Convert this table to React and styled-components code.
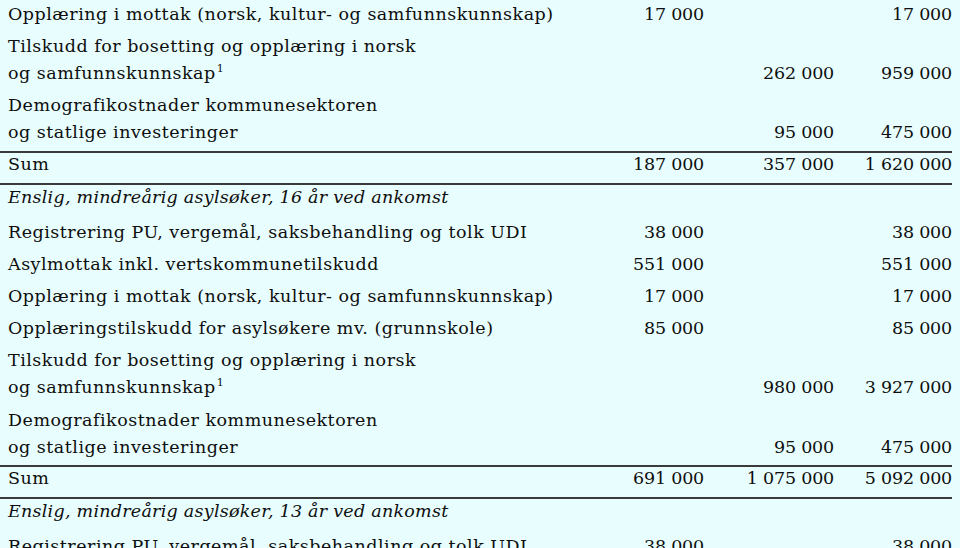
import React from "react";
import styled, { createGlobalStyle, css } from "styled-components";

const Global = createGlobalStyle`
  html, body {
    margin: 0;
    padding: 0;
    background: #e8fdfd;
  }
  body {
    width: 960px;
    height: 548px;
    overflow: hidden;
  }
`;

const Sheet = styled.div`
  width: 952px;
  margin-top: -1.5px;
  font-family: "DejaVu Serif", "Liberation Serif", serif;
  font-size: 17.5px;
  color: #0e0e0e;
`;

const Row = styled.div`
  display: grid;
  grid-template-columns: 1fr 110px 130px 118px;
  align-items: end;
  line-height: 27px;
  padding: 2.6px 0;

  ${(p) =>
    p.$kind === "sum" &&
    css`
      margin-top: 2px;
      line-height: 22px;
      padding: 0 0 8px;
      border-top: 2px solid #3a3a3a;
      border-bottom: 2px solid #3a3a3a;
    `}

  ${(p) =>
    p.$kind === "heading" &&
    css`
      line-height: 24px;
      padding: 0 0 7px;
      font-style: italic;
    `}
`;

const Label = styled.div`
  padding-left: 8px;
  white-space: nowrap;
  letter-spacing: ${(p) => (p.$italic ? "0.25px" : "0.5px")};
`;

const Num = styled.div`
  text-align: right;
  white-space: nowrap;
  letter-spacing: -0.2px;
`;

const Note = styled.sup`
  font-size: 11px;
  line-height: 0;
  vertical-align: 7px;
  margin-left: 1px;
`;

const rows = [
  { label: ["Opplæring i mottak (norsk, kultur- og samfunnskunnskap)"], v: ["17 000", "", "17 000"] },
  { label: ["Tilskudd for bosetting og opplæring i norsk", "og samfunnskunnskap"], note: true, v: ["", "262 000", "959 000"] },
  { label: ["Demografikostnader kommunesektoren", "og statlige investeringer"], v: ["", "95 000", "475 000"] },
  { kind: "sum", label: ["Sum"], v: ["187 000", "357 000", "1 620 000"] },
  { kind: "heading", label: ["Enslig, mindreårig asylsøker, 16 år ved ankomst"], v: ["", "", ""] },
  { label: ["Registrering PU, vergemål, saksbehandling og tolk UDI"], v: ["38 000", "", "38 000"] },
  { label: ["Asylmottak inkl. vertskommunetilskudd"], v: ["551 000", "", "551 000"] },
  { label: ["Opplæring i mottak (norsk, kultur- og samfunnskunnskap)"], v: ["17 000", "", "17 000"] },
  { label: ["Opplæringstilskudd for asylsøkere mv. (grunnskole)"], v: ["85 000", "", "85 000"] },
  { label: ["Tilskudd for bosetting og opplæring i norsk", "og samfunnskunnskap"], note: true, v: ["", "980 000", "3 927 000"] },
  { label: ["Demografikostnader kommunesektoren", "og statlige investeringer"], v: ["", "95 000", "475 000"] },
  { kind: "sum", label: ["Sum"], v: ["691 000", "1 075 000", "5 092 000"] },
  { kind: "heading", label: ["Enslig, mindreårig asylsøker, 13 år ved ankomst"], v: ["", "", ""] },
  { label: ["Registrering PU, vergemål, saksbehandling og tolk UDI"], v: ["38 000", "", "38 000"] },
];

export default function App() {
  return (
    <>
      <Global />
      <Sheet>
        {rows.map((r, i) => (
          <Row key={i} $kind={r.kind}>
            <Label $italic={r.kind === "heading"}>
              {r.label.map((l, j) => (
                <React.Fragment key={j}>
                  {j > 0 && <br />}
                  {l}
                  {r.note && j === r.label.length - 1 && <Note>1</Note>}
                </React.Fragment>
              ))}
            </Label>
            {r.v.map((n, k) => (
              <Num key={k}>{n}</Num>
            ))}
          </Row>
        ))}
      </Sheet>
    </>
  );
}
